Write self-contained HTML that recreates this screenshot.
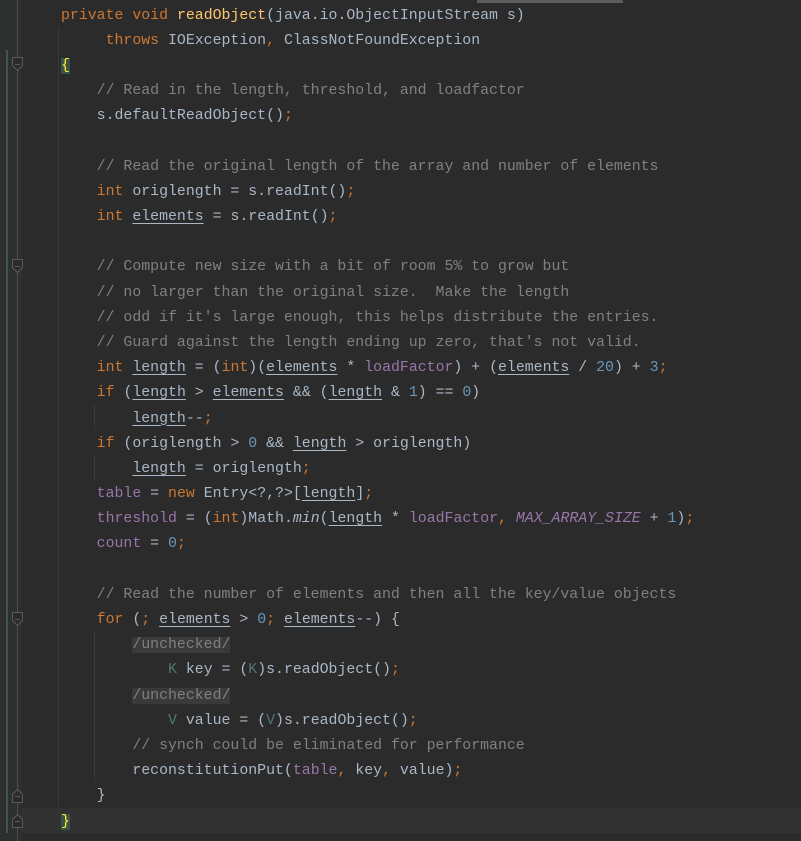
<!DOCTYPE html>
<html><head><meta charset="utf-8"><style>
html,body{margin:0;padding:0;background:#2b2b2b;width:801px;height:841px;overflow:hidden;position:relative}
pre{position:absolute;left:61px;top:3.5px;margin:0;font-family:"Liberation Mono",monospace;font-size:14.87px;line-height:25.19px;color:#a9b7c6;white-space:pre}
.k{color:#cc7832}.c{color:#808080}.n{color:#6897bb}.f{color:#9876aa}.m{color:#ffc66d}.t{color:#507874}
.i{font-style:italic}
.u{text-decoration:underline;text-underline-offset:3px;text-decoration-color:#a9b7c6}
.b{background:#3b514d;color:#ffef28}
.a{background:#3a3a3a;color:#808080}
.gl{position:absolute;background:#393939;width:1px}
</style></head><body>
<div style="position:absolute;left:0;top:0;width:22px;height:841px;background:#2e3030"></div>
<div style="position:absolute;left:6px;top:50px;width:2px;height:783px;background:#44574d"></div>
<div style="position:absolute;left:17px;top:0;width:1px;height:841px;background:#4d4d4d"></div>
<div style="position:absolute;left:22px;top:808px;width:779px;height:25px;background:#323232"></div>
<div style="position:absolute;left:477px;top:0;width:146px;height:3px;background:#5b5d5f"></div>
<div class="gl" style="left:58px;top:27px;height:780px"></div>
<div class="gl" style="left:94px;top:405px;height:25px"></div>
<div class="gl" style="left:94px;top:455px;height:25px"></div>
<div class="gl" style="left:94px;top:632px;height:150px"></div>
<svg style="position:absolute;left:0;top:0" width="30" height="841">
<g fill="#2b2b2b" stroke="#5a5a5a" stroke-width="1">
<path d="M12.5 57.5h10v8l-5 5l-5-5z"/><path d="M15 64.5h5"/>
<path d="M12.5 259.5h10v8l-5 5l-5-5z"/><path d="M15 266.5h5"/>
<path d="M12.5 612.5h10v8l-5 5l-5-5z"/><path d="M15 619.5h5"/>
<path d="M12.5 802.5h10v-8l-5-5l-5 5z"/><path d="M15 796.5h5"/>
<path d="M12.5 827.5h10v-8l-5-5l-5 5z"/><path d="M15 821.5h5"/>
</g></svg>
<pre><span class="k">private void </span><span class="m">readObject</span>(java.io.ObjectInputStream s)
     <span class="k">throws </span>IOException<span class="k">, </span>ClassNotFoundException
<span class="b">{</span>
    <span class="c">// Read in the length, threshold, and loadfactor</span>
    s.defaultReadObject()<span class="k">;</span>

    <span class="c">// Read the original length of the array and number of elements</span>
    <span class="k">int </span>origlength = s.readInt()<span class="k">;</span>
    <span class="k">int </span><span class="u">elements</span> = s.readInt()<span class="k">;</span>

    <span class="c">// Compute new size with a bit of room 5% to grow but</span>
    <span class="c">// no larger than the original size.  Make the length</span>
    <span class="c">// odd if it's large enough, this helps distribute the entries.</span>
    <span class="c">// Guard against the length ending up zero, that's not valid.</span>
    <span class="k">int </span><span class="u">length</span> = (<span class="k">int</span>)(<span class="u">elements</span> * <span class="f">loadFactor</span>) + (<span class="u">elements</span> / <span class="n">20</span>) + <span class="n">3</span><span class="k">;</span>
    <span class="k">if </span>(<span class="u">length</span> &gt; <span class="u">elements</span> &amp;&amp; (<span class="u">length</span> &amp; <span class="n">1</span>) == <span class="n">0</span>)
        <span class="u">length</span>--<span class="k">;</span>
    <span class="k">if </span>(origlength &gt; <span class="n">0</span> &amp;&amp; <span class="u">length</span> &gt; origlength)
        <span class="u">length</span> = origlength<span class="k">;</span>
    <span class="f">table</span> = <span class="k">new </span>Entry&lt;?,?&gt;[<span class="u">length</span>]<span class="k">;</span>
    <span class="f">threshold</span> = (<span class="k">int</span>)Math.<span class="i">min</span>(<span class="u">length</span> * <span class="f">loadFactor</span><span class="k">, </span><span class="f i">MAX_ARRAY_SIZE</span> + <span class="n">1</span>)<span class="k">;</span>
    <span class="f">count</span> = <span class="n">0</span><span class="k">;</span>

    <span class="c">// Read the number of elements and then all the key/value objects</span>
    <span class="k">for </span>(<span class="k">; </span><span class="u">elements</span> &gt; <span class="n">0</span><span class="k">; </span><span class="u">elements</span>--) {
        <span class="a">/unchecked/</span>
            <span class="t">K</span> key = (<span class="t">K</span>)s.readObject()<span class="k">;</span>
        <span class="a">/unchecked/</span>
            <span class="t">V</span> value = (<span class="t">V</span>)s.readObject()<span class="k">;</span>
        <span class="c">// synch could be eliminated for performance</span>
        reconstitutionPut(<span class="f">table</span><span class="k">, </span>key<span class="k">, </span>value)<span class="k">;</span>
    }
<span class="b">}</span></pre>
</body></html>
